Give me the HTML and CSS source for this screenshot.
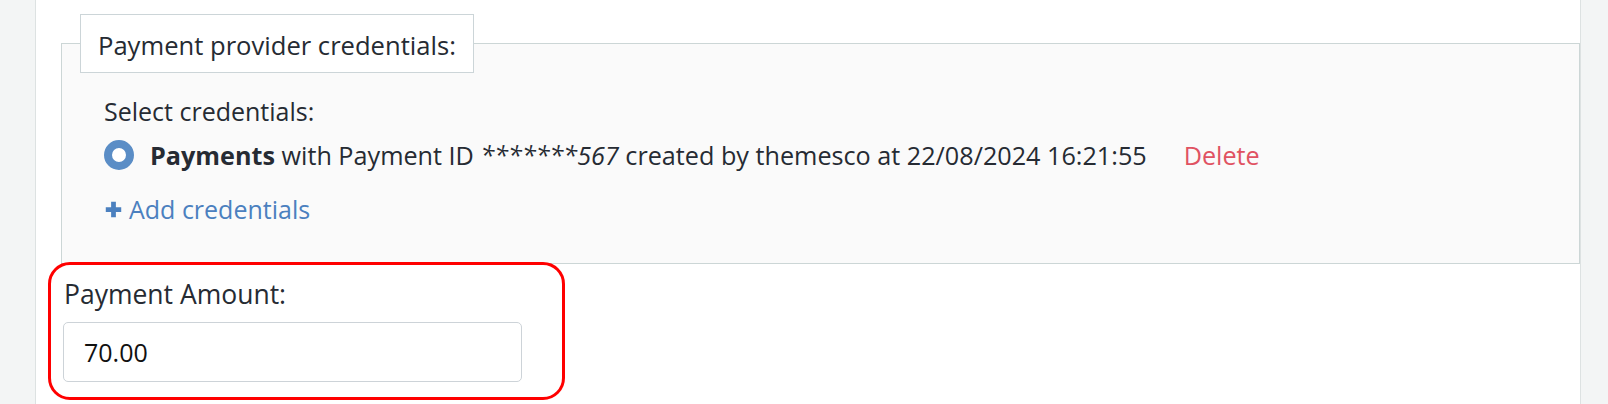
FILE: index.html
```html
<!DOCTYPE html>
<html lang="en">
<head>
<meta charset="utf-8">
<title>Payment</title>
<link rel="stylesheet" href="styles.css">
</head>
<body>
<div class="page">
  <div class="gutter gutter-left"></div>
  <main class="content">
    <fieldset class="creds">
      <legend class="creds-legend">Payment provider credentials:</legend>
      <div class="creds-body">
        <div class="line">Select credentials:</div>
        <div class="line cred-row">
          <span class="radio"></span>
          <span class="cred-text"><strong>Payments</strong> with Payment ID <em>*******567</em> created by themesco at 22/08/2024 16:21:55</span>
          <a class="delete" href="#">Delete</a>
        </div>
        <a class="line add" href="#">
          <svg class="plus" viewBox="0 0 16 16" width="16" height="16"><path d="M6 1.5h4v4.5h4.5v4H10v4.5H6V10H1.5V6H6z" fill="#4b80bf"/></svg>
          <span>Add credentials</span>
        </a>
      </div>
    </fieldset>
    <div class="amount-group">
      <label class="amount-label" for="amt">Payment Amount:</label>
      <input class="amount-input" id="amt" type="text" value="70.00">
    </div>
  </main>
  <div class="gutter gutter-right"></div>
</div>
</body>
</html>
```
FILE: styles.css
```css
html, body {
  margin: 0;
  padding: 0;
  height: 100%;
}
body {
  font-family: "Open Sans", "Noto Sans", sans-serif;
  font-size: 25px;
  line-height: 34px;
  color: #262b33;
  background: #f3f5f5;
}
.page {
  display: flex;
  height: 404px;
}
.gutter {
  background: #f3f5f5;
}
.gutter-left {
  width: 35px;
  border-right: 1px solid #dde2e2;
}
.gutter-right {
  flex: 1;
  border-left: 1px solid #dde2e2;
}
.content {
  width: 1544px;
  background: #fff;
  padding: 14px 0 0 25px;
  box-sizing: border-box;
}
.creds {
  margin: 0;
  padding: 0 0 0 18px;
  border: 1px solid #ccd6d6;
  background: #fafafa;
  min-width: 0;
}
.creds-legend {
  padding: 14px 17px 9px 17px;
  margin: 0;
  border: 1px solid #ccd5d8;
  background: #fff;
  line-height: 34px;
  font-size: 25.6px;
}
.creds-body {
  padding: 21px 0 37px 24px;
}
.line {
  display: flex;
  align-items: center;
  height: 34px;
}
.cred-row {
  margin-top: 10px;
  font-size: 25.2px;
}
.radio {
  width: 14px;
  height: 14px;
  border: 8px solid #5a8dc6;
  border-radius: 50%;
  background: #fff;
  margin-right: 16px;
  flex: none;
}
.cred-text strong {
  font-weight: 700;
}
.cred-text em {
  font-style: italic;
}
.delete {
  color: #e05262;
  text-decoration: none;
  margin-left: 37px;
}
.add {
  margin-top: 20px;
  color: #4b80bf;
  text-decoration: none;
  width: max-content;
}
.plus {
  width: 19px;
  height: 19px;
  margin-right: 6px;
}
.amount-group {
  width: max-content;
  margin: -2px 0 0 -13px;
  padding: 12px 40px 15px 12px;
  border: 3px solid #ff0000;
  border-radius: 22px;
  display: flex;
  flex-direction: column;
}
.amount-label {
  display: block;
  margin-left: 1px;
  line-height: 34px;
  font-size: 26.5px;
}
.amount-input {
  margin-top: 11px;
  width: 459px;
  height: 60px;
  box-sizing: border-box;
  border: 1px solid #cdd3d8;
  border-radius: 5px;
  padding: 0 20px;
  font-family: "Open Sans", "Noto Sans", sans-serif;
  font-size: 25px;
  color: #111;
  background: #fff;
  outline: none;
}
```
